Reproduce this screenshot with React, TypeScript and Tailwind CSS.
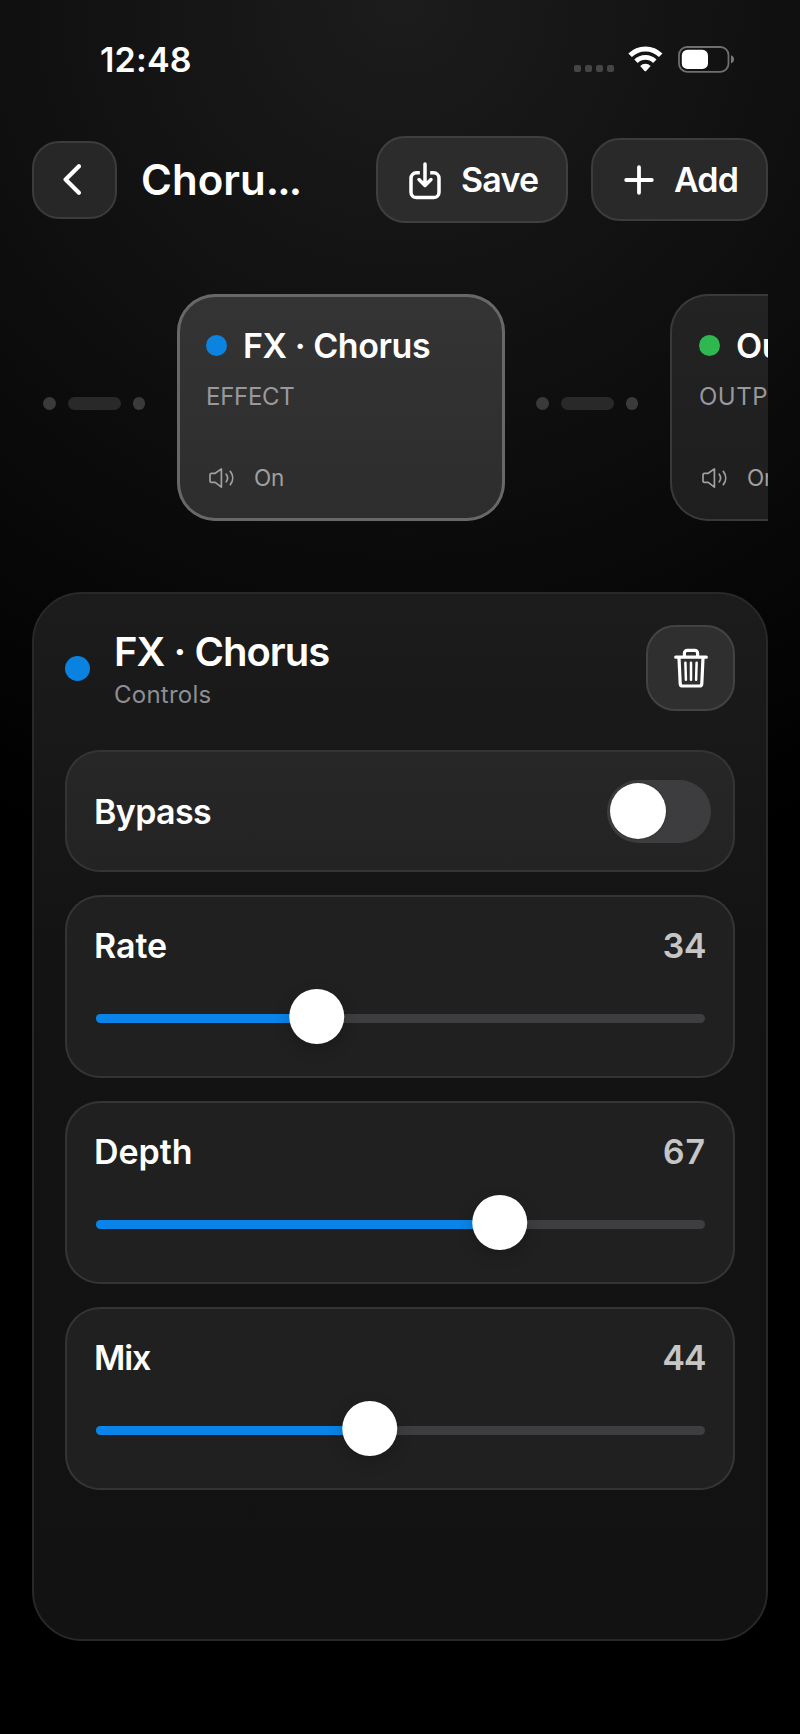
import type { ReactNode } from 'react'

type Slider = { label: string; value: number; position: number; tracking: string }

const sliders: Slider[] = [
  { label: 'Rate', value: 34, position: 36.3, tracking: 'tracking-[-0.002em]' },
  { label: 'Depth', value: 67, position: 66.4, tracking: 'tracking-[-0.002em]' },
  { label: 'Mix', value: 44, position: 45, tracking: 'tracking-[-0.035em]' },
]

function StatusBar() {
  return (
    <div className="flex h-[119px] shrink-0 items-center justify-between pr-[33px] pl-[68px]">
      <span className="text-[34px] leading-10 font-semibold tracking-[0.006em]">12:48</span>
      <div className="flex h-[27px] items-start">
        <div className="mt-[19px] flex gap-1">
          <span className="size-[7px] rounded-[2px] bg-[#454545]" />
          <span className="size-[7px] rounded-[2px] bg-[#454545]" />
          <span className="size-[7px] rounded-[2px] bg-[#454545]" />
          <span className="size-[7px] rounded-[2px] bg-[#454545]" />
        </div>
        <svg className="ml-[14px]" width="35" height="27" viewBox="0 0 35 27" fill="none">
          <path d="M2.1 9.3a21.6 21.6 0 0 1 30.6 0" stroke="#fff" strokeWidth="5" />
          <path d="M8 15.2a13.3 13.3 0 0 1 18.8 0" stroke="#fff" strokeWidth="4.8" />
          <path d="M12.2 20a7 7 0 0 1 10.4 0l-4.4 4.9a1.1 1.1 0 0 1-1.6 0z" fill="#fff" />
        </svg>
        <svg className="ml-[15px]" width="57" height="27" viewBox="0 0 57 27" fill="none">
          <rect x="1" y="1" width="49.5" height="24.8" rx="8" stroke="#6f6f6f" strokeWidth="1.8" />
          <rect x="3.8" y="3.8" width="26.2" height="19.2" rx="5.6" fill="#fff" />
          <path d="M53 9.2c2.2.8 3 2.4 3 4.1s-.8 3.3-3 4.1z" fill="#7a7a7a" />
        </svg>
      </div>
    </div>
  )
}

function Header() {
  return (
    <div className="mt-[17px] flex h-[87px] shrink-0 items-center">
      <button className="flex h-[78px] w-[85px] items-center justify-center rounded-[27px] border-2 border-[#3c3c3c] bg-[#272727]">
        <svg className="mr-[5px]" width="18" height="31" viewBox="0 0 18 31" fill="none" stroke="#fff" strokeWidth="4.2" strokeLinecap="round" strokeLinejoin="round">
          <path d="M15.9 2.3 2.6 15.5l13.3 13.2" />
        </svg>
      </button>
      <h1 className="ml-6 w-[211px] text-[42px] leading-[50px] font-semibold">
        Choru<span className="tracking-[-0.045em]">...</span>
      </h1>
      <button className="ml-6 flex h-[87px] w-[192px] items-center rounded-[29px] border-2 border-[#3f3f3f] bg-[#2c2c2c] pl-[31px]">
        <svg className="mt-[3px]" width="32" height="38" viewBox="0 0 32 38" fill="none" stroke="#fff" strokeWidth="3.5" strokeLinecap="round" strokeLinejoin="round">
          <path strokeLinecap="butt" d="M10.8 10.8H7.4a5.4 5.4 0 0 0-5.4 5.4v14a5.4 5.4 0 0 0 5.4 5.4h17.2a5.4 5.4 0 0 0 5.4-5.4v-14a5.4 5.4 0 0 0-5.4-5.4h-3.4" />
          <path d="M16 1.9v21.4M10 17.5l6 6 6-6" />
        </svg>
        <span className="ml-5 text-[34px] leading-10 font-semibold tracking-[-0.023em]">Save</span>
      </button>
      <button className="ml-[23px] flex h-[83px] w-[177px] items-center rounded-[29px] border-2 border-[#3c3c3c] bg-[#292929] pl-[31px]">
        <svg width="30" height="30" viewBox="0 0 30 30" fill="none" stroke="#fff" strokeWidth="3.8" strokeLinecap="round">
          <path d="M15 2.2v25.6M2.2 15h25.6" />
        </svg>
        <span className="ml-5 text-[34px] leading-10 font-semibold tracking-[-0.025em]">Add</span>
      </button>
    </div>
  )
}

function Connector() {
  return (
    <div className="mb-2 flex w-[102px] shrink-0 items-center justify-between">
      <span className="size-[12.5px] rounded-full bg-[#3a3a3a]" />
      <span className="h-[12.5px] w-[53px] rounded-full bg-[#292929]" />
      <span className="size-[12.5px] rounded-full bg-[#3a3a3a]" />
    </div>
  )
}

type NodeCardProps = { title: string; kind: ReactNode; dot: string; frame: string }

function NodeCard({ title, kind, dot, frame }: NodeCardProps) {
  return (
    <div className={`flex h-[227px] w-[328px] shrink-0 flex-col rounded-[38px] px-[29px] pt-[31px] pb-[29px] ring-inset ${frame}`}>
      <div className="flex items-center">
        <span className={`size-[21px] rounded-full ${dot}`} />
        <span className="mt-px -mb-px ml-4 text-[34px] leading-10 font-semibold tracking-[-0.013em] whitespace-nowrap">{title}</span>
      </div>
      <div className="mt-[18px] text-[24px] leading-7 text-[#98989f]">{kind}</div>
      <div className="mt-auto flex h-7 items-center text-[#a0a0a0]">
        <svg className="ml-[3px]" width="26" height="20" viewBox="0 0 26 20" fill="none" stroke="currentColor" strokeWidth="1.7" strokeLinecap="round" strokeLinejoin="round">
          <path d="M1 6.8c0-.9.6-1.5 1.5-1.5h3.7L12.4.9v18.2l-6.2-4.7H2.5c-.9 0-1.5-.6-1.5-1.5z" />
          <path d="M17.2 6.2c1.7 2.3 1.7 5.3 0 7.6M21.3 3.4c3.2 4 3.2 9.2 0 13.2" />
        </svg>
        <span className="ml-[19px] text-[22.5px] leading-7 tracking-[-0.01em]">On</span>
      </div>
    </div>
  )
}

function Chain() {
  return (
    <div className="mt-[71px] flex h-[227px] shrink-0 overflow-hidden pl-[11px]">
      <Connector />
      <div className="w-8 shrink-0" />
      <NodeCard
        title="FX · Chorus"
        kind={<span className="tracking-[-0.012em]">EFFECT</span>}
        dot="bg-[#0a84e0]"
        frame="bg-linear-to-b from-[#343434] to-[#2d2d2d] ring-3 ring-[#686868]"
      />
      <div className="w-[31px] shrink-0" />
      <Connector />
      <div className="w-8 shrink-0" />
      <NodeCard
        title="Output"
        kind={<span className="tracking-[0.02em]">OUTPUT</span>}
        dot="bg-[#2fb850]"
        frame="bg-linear-to-b from-[#232323] to-[#1e1e1e] ring-2 ring-[#393939]"
      />
    </div>
  )
}

function Row({ className, children }: { className: string; children: ReactNode }) {
  return (
    <div className={`rounded-[35px] px-[29px] ring-2 ring-[#343434] ring-inset ${className}`}>{children}</div>
  )
}

function SliderRow({ label, value, position, tracking }: Slider) {
  return (
    <Row className="h-[183px] bg-[#202020] pt-[31px]">
      <div className="flex justify-between text-[34px] leading-10 font-semibold">
        <span className={tracking}>{label}</span>
        <span className="tracking-[-0.01em] text-[#c6c6c6] tabular-nums">{value}</span>
      </div>
      <div className="relative mx-[1.5px] mt-[22px] flex h-14 items-center">
        <div className="mt-[5px] h-[9px] w-full overflow-hidden rounded-full bg-[#3e3e40]">
          <div className="h-full bg-[#0a84e8]" style={{ width: `${position}%` }} />
        </div>
        <div
          className="absolute top-[0.5px] size-[55.5px] -translate-x-1/2 rounded-full bg-white shadow-[0_5px_16px_rgba(0,0,0,0.2)]"
          style={{ left: `${position}%` }}
        />
      </div>
    </Row>
  )
}

function ControlsPanel() {
  return (
    <div className="mt-[71px] h-[1049px] shrink-0 rounded-[50px] border-2 border-[#282828] bg-linear-to-b from-[#1c1c1c] via-[#131313] via-35% to-[#121212] p-[31px]">
      <div className="flex h-[86px] items-center">
        <span className="size-[25px] rounded-full bg-[#0a82df]" />
        <div className="ml-6 flex h-full flex-col pt-1">
          <h2 className="text-[40px] leading-[45px] font-semibold tracking-[-0.024em]">FX · Chorus</h2>
          <p className="mt-1.5 text-[24px] leading-[30px] tracking-[0.01em] text-[#8e8e93]">Controls</p>
        </div>
        <button className="ml-auto flex h-[86px] w-[89px] items-center justify-center rounded-[29px] border-2 border-[#434343] bg-[#2f2f2f]">
          <svg width="34" height="40" viewBox="0 0 34 40" fill="none" stroke="#fff" strokeWidth="3.2" strokeLinecap="round" strokeLinejoin="round">
            <path d="M1.7 9.2h30.6M10.4 8.8V5.2a2.8 2.8 0 0 1 2.8-2.8h7.6a2.8 2.8 0 0 1 2.8 2.8v3.6" />
            <path d="M5 10l1.2 25.6a2.5 2.5 0 0 0 2.5 2.4h16.6a2.5 2.5 0 0 0 2.5-2.4L29 10" />
            <path d="M11.4 14.7l.5 17M17 14.7v17M22.6 14.7l-.5 17" strokeWidth="2.5" />
          </svg>
        </button>
      </div>
      <div className="mt-[39px] flex flex-col gap-[23px]">
        <Row className="flex h-[122px] items-center justify-between bg-linear-to-b from-[#272727] to-[#232323] pr-6">
          <span className="mt-0.5 text-[34px] leading-10 font-semibold tracking-[-0.019em]">Bypass</span>
          <div className="h-[63px] w-[104px] rounded-full bg-[#3d3d3f] py-[3.5px] pl-[3px]">
            <div className="size-[56px] rounded-full bg-white shadow-[0_0_2px_rgba(0,0,0,0.4)]" />
          </div>
        </Row>
        {sliders.map((s) => (
          <SliderRow key={s.label} {...s} />
        ))}
      </div>
    </div>
  )
}

export default function App() {
  return (
    <div className="flex h-[1734px] w-[800px] flex-col overflow-hidden bg-black bg-[radial-gradient(circle_900px_at_50%_0,#1c1c1c,#000)] px-8 font-['Inter',sans-serif] text-white">
      <StatusBar />
      <Header />
      <Chain />
      <ControlsPanel />
    </div>
  )
}
